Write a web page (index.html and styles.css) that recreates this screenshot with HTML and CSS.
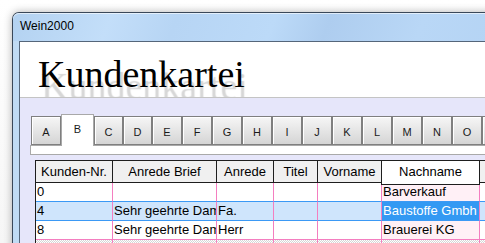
FILE: index.html
```html
<!DOCTYPE html>
<html lang="de">
<head>
    <meta charset="UTF-8">
    <title>Wein2000</title>
    <link rel="stylesheet" href="styles.css">
</head>
<body>
    <div class="desktop">
        <div class="window">
            <div class="titlebar">Wein2000</div>
            <div class="client">
                <!-- Kopfbereich -->
                <div class="banner">
                    <h1>Kundenkartei</h1>
                </div>

                <div class="form">
                    <!-- Register A-P -->
                    <div class="tabs">
                        <div class="tab">A</div>
                        <div class="tab active">B</div>
                        <div class="tab narrow">C</div>
                        <div class="tab narrow">D</div>
                        <div class="tab">E</div>
                        <div class="tab">F</div>
                        <div class="tab">G</div>
                        <div class="tab">H</div>
                        <div class="tab">I</div>
                        <div class="tab">J</div>
                        <div class="tab">K</div>
                        <div class="tab">L</div>
                        <div class="tab">M</div>
                        <div class="tab">N</div>
                        <div class="tab">O</div>
                        <div class="tab">P</div>
                    </div>
                    <div class="tabpage"></div>

                    <!-- Kundenliste -->
                    <table class="grid">
                        <colgroup>
                            <col class="c-nr">
                            <col class="c-brief">
                            <col class="c-anrede">
                            <col class="c-titel">
                            <col class="c-vorname">
                            <col class="c-nachname">
                            <col class="c-rest">
                        </colgroup>
                        <thead>
                            <tr>
                                <th>Kunden-Nr.</th>
                                <th>Anrede Brief</th>
                                <th>Anrede</th>
                                <th>Titel</th>
                                <th>Vorname</th>
                                <th class="sorted">Nachname</th>
                                <th></th>
                            </tr>
                        </thead>
                        <tbody>
                            <tr class="before-sel">
                                <td>0</td>
                                <td></td>
                                <td></td>
                                <td></td>
                                <td></td>
                                <td class="name">Barverkauf</td>
                                <td></td>
                            </tr>
                            <tr class="sel">
                                <td>4</td>
                                <td>Sehr geehrte Damen und Herren</td>
                                <td>Fa.</td>
                                <td></td>
                                <td></td>
                                <td class="name current">Baustoffe Gmbh</td>
                                <td></td>
                            </tr>
                            <tr>
                                <td>8</td>
                                <td>Sehr geehrte Damen und Herren</td>
                                <td>Herr</td>
                                <td></td>
                                <td></td>
                                <td class="name">Brauerei KG</td>
                                <td></td>
                            </tr>
                            <tr class="new">
                                <td></td>
                                <td></td>
                                <td></td>
                                <td></td>
                                <td></td>
                                <td></td>
                                <td></td>
                            </tr>
                        </tbody>
                    </table>
                </div>
            </div>
        </div>
    </div>
</body>
</html>
```

FILE: styles.css
```css
/* Seite */
body {
    margin: 0;
    background: #ffffff;
    font-family: "Liberation Sans", Arial, sans-serif;
}

.desktop {
    width: 485px;
    height: 243px;
    overflow: hidden;
    box-sizing: border-box;
    padding: 12px 0 0 12px;
    background: linear-gradient(#ffffff, #f6f6f6);
}

/* Fenster */
.window {
    width: 540px;
    height: 260px;
    border: 1px solid #3a4859;
    border-bottom: none;
    border-radius: 7px 7px 0 0;
    background: #c0dbf4;
    box-shadow: 0 0 9px rgba(0, 0, 0, 0.3);
}

.titlebar {
    height: 28px;
    line-height: 26px;
    padding-left: 7px;
    font-size: 12px;
    color: #000;
    border-radius: 6px 6px 0 0;
    background: linear-gradient(110deg, #b3d2f1 0%, #c3def9 18%, #b7d5f4 30%, #bcdaf8 48%, #aecdef 58%, #b9d7f6 75%, #b2d2f3 100%);
    box-shadow: inset 0 1px 0 rgba(255, 255, 255, 0.6);
}

.client {
    margin: 0 6px;
    height: 220px;
    border: 1px solid #55667a;
    background: #e6e6fa;
}

/* Kopfbereich */
.banner {
    height: 55px;
    overflow: hidden;
    background: #ffffff;
    border-bottom: 1px solid #c4c4c4;
}

.banner h1 {
    margin: 0;
    padding: 9px 0 0 18px;
    font-family: "Liberation Serif", "Times New Roman", serif;
    font-size: 38px;
    font-weight: normal;
    line-height: 46px;
    color: #000;
    text-shadow: 3px 12px 1px rgba(0, 0, 0, 0.16);
}

/* Formular */
.form {
    padding: 16px 0 0 10px;
}

.tabs {
    display: flex;
    align-items: flex-end;
    padding-left: 1px;
}

.tab {
    flex: none;
    box-sizing: border-box;
    width: 30px;
    height: 29px;
    padding-top: 3px;
    line-height: 24px;
    text-align: center;
    font-size: 11px;
    color: #1a1a1a;
    border: 1px solid #7f7f7f;
    background: linear-gradient(#f6f6f6, #d5d5d5);
    box-shadow: inset 1px 1px 0 #ffffff;
}

.tab.narrow {
    width: 29px;
}

.tab.active {
    position: relative;
    z-index: 1;
    width: 33px;
    height: 32px;
    margin-bottom: -1px;
    padding-top: 2px;
    border-color: #a8a8a8;
    border-bottom: none;
    background: #ffffff;
    box-shadow: none;
}

.tabpage {
    height: 8px;
    background: #ffffff;
    border: 1px solid #a9a9a9;
    border-right: none;
}

/* Tabelle */
.grid {
    margin: 5px 0 0 5px;
    border-collapse: separate;
    border-spacing: 0;
    table-layout: fixed;
    width: 510px;
    border-top: 1px solid #1e1e1e;
    border-left: 1px solid #1e1e1e;
    font-size: 13px;
}

.c-nr { width: 77px; }
.c-brief { width: 104px; }
.c-anrede { width: 57px; }
.c-titel { width: 44px; }
.c-vorname { width: 64px; }
.c-nachname { width: 98px; }
.c-rest { width: 66px; }

.grid th {
    padding: 0;
    line-height: 21px;
    font-weight: normal;
    color: #000;
    background: #f0f0f0;
    border-right: 1px solid #1e1e1e;
    border-bottom: 1px solid #1e1e1e;
    white-space: nowrap;
    overflow: hidden;
}

.grid th.sorted {
    position: relative;
    overflow: visible;
    background: #ffffff;
}

.grid th.sorted::after {
    content: "";
    position: absolute;
    left: -1px;
    right: -1px;
    top: 100%;
    height: 2px;
    background: #ffffff;
    border: 1px solid #1e1e1e;
    border-top: none;
}

.grid td {
    padding: 0 1px;
    line-height: 18px;
    height: 18px;
    color: #000;
    background: #ffffff;
    border-right: 1px solid #f47ec0;
    border-bottom: 1px solid #f47ec0;
    white-space: nowrap;
    overflow: hidden;
}

.grid td.name {
    background: #fff0f6;
}

.grid tr.before-sel td {
    border-bottom-color: #3b99f5;
}

.grid tr.sel td {
    background: #cfe5fc;
    border-bottom-color: #3b99f5;
}

.grid tr.sel td.current {
    background: #3399f3;
    color: #ffffff;
}

.grid tr.new td {
    background: repeating-conic-gradient(#d6d6d6 0 25%, #ffffff 0 50%) 0 0 / 2px 2px;
}
```
